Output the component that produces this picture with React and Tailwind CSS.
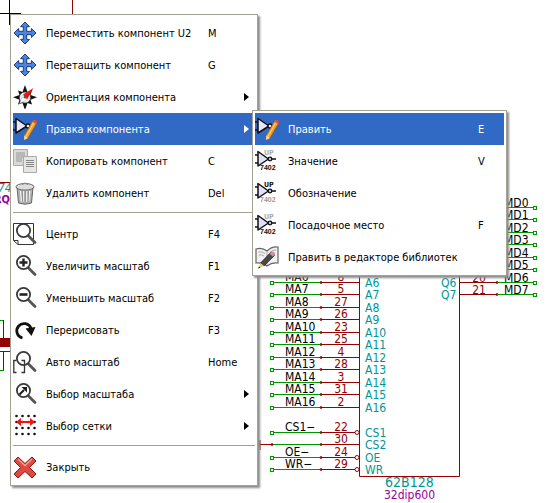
import React from "react";

/* ---------- icons (24 x 24) ---------- */

function Icon({ children }) {
  return (
    <svg viewBox="0 0 24 24" className="size-6 shrink-0" aria-hidden="true">
      {children}
    </svg>
  );
}

function MoveIcon() {
  return (
    <Icon>
      <path d="M12.5 2 17 6.6H14V11H18.400V8L23 12.500 18.400 17V14H14V18.400H17L12.500 23 8 18.400H11V14H6.600V17L2 12.500 6.600 8V11H11V6.600H8Z" fill="#999" opacity=".5" />
      <path d="M12 1 16.500 5.600H13.700V10.300H18.400V7.500L23 12 18.400 16.500V13.700H13.700V18.400H16.500L12 23 7.500 18.400H10.300V13.700H5.600V16.500L1 12 5.600 7.500V10.300H10.300V5.600H7.500Z" fill="#4a86e0" stroke="#1c3f7c" strokeWidth="1" strokeLinejoin="round" />
    </Icon>
  );
}

function CompassIcon() {
  return (
    <Icon>
      <path d="M12 0 14.500 7 19 5.500 17.500 10 24 12.300 17.500 14.800 19 19.500 14.500 18 12 25 9.500 18 5 19.500 6.500 14.800 0 12.300 6.500 10 5 5.500 9.500 7Z" fill="#111" />
      <circle cx="12" cy="12.500" r="5.600" fill="#f0f0f0" stroke="#333" strokeWidth=".7" />
      <path d="M20.500 3 10 9.500 14 14.500Z" fill="#e01818" />
      <path d="M6.500 18.500 10 10 14 14.500Z" fill="#fff" stroke="#aaa" strokeWidth=".5" />
      <circle cx="12" cy="12.300" r="1.300" fill="#555" />
    </Icon>
  );
}

function EditIcon() {
  return (
    <Icon>
      <path d="M0 5H3M0 13H3M16 9H19" stroke="#111" strokeWidth="1.500" />
      <path d="M3 1.500V16L14 9Z" fill="#e6e6ff" stroke="#111" strokeWidth="1.500" strokeLinejoin="round" />
      <circle cx="15" cy="9" r="2" fill="#e6e6ff" stroke="#111" strokeWidth="1.300" />
      <path d="M19.500 4 23.500 6.500 15 21 11 23 11.300 18.500Z" fill="#f4a02c" stroke="#9c5716" strokeWidth=".7" />
      <path d="M20.500 6 13 19.500" stroke="#ffd382" strokeWidth="1" />
      <path d="M19.500 4 21 2.500Q24 3 24 5.500L23.500 6.700Z" fill="#e24c48" />
      <path d="M11.300 18.500 15 21 11 23Z" fill="#f5d7a5" />
    </Icon>
  );
}

function CopyIcon() {
  return (
    <Icon>
      <path d="M.5.500H14.500V16.500H.500Z" fill="#d9d9d5" stroke="#aaa" />
      <path d="M3 4H12M3 6H12M3 8H12M3 10H9M3 12H9" stroke="#999" />
      <path d="M10.500 7.500H23.500V23.500H10.500Z" fill="#e6e6e2" stroke="#aaa" />
      <path d="M13 11.500H21M13 13.500H21M13 15.500H21M13 17.500H21" stroke="#888" />
    </Icon>
  );
}

function TrashIcon() {
  return (
    <Icon>
      <path d="M4 6H20L18.500 22Q12 24.500 5.500 22Z" fill="#b4b4b4" stroke="#666" />
      <path d="M7.500 10 8.500 20.500M10.500 10V21M13.700 10V21M16.700 10 15.800 20.500" stroke="#eee" strokeWidth="1.300" />
      <path d="M9 9.500 9.800 21M12.200 10V21.500M15.200 10V21" stroke="#777" strokeWidth=".7" />
      <ellipse cx="12" cy="5.800" rx="9" ry="3.300" fill="#ddd" stroke="#666" />
      <path d="M9 3.500Q12 .5 15 3.500" fill="#ccc" stroke="#777" />
    </Icon>
  );
}

function Lens() {
  return (
    <>
      <path d="M15.500 14 22 20.500" stroke="#555" strokeWidth="2.800" strokeLinecap="round" />
      <circle cx="10.500" cy="8.500" r="6.600" fill="none" stroke="#3a3a3a" strokeWidth="1.800" />
    </>
  );
}

function CenterIcon() {
  return (
    <Icon>
      <path d="M.5 1.500H20.500V22.500H5L.500 18.500ZM5 22V18.500H1" fill="none" stroke="#333" />
      <Lens />
    </Icon>
  );
}

function ZoomInIcon() {
  return (
    <Icon>
      <Lens />
      <path d="M6.500 8.500H14.500M10.500 4.500V12.500" stroke="#222" strokeWidth="2.400" />
    </Icon>
  );
}

function ZoomOutIcon() {
  return (
    <Icon>
      <Lens />
      <path d="M6.500 8.500H14.500" stroke="#222" strokeWidth="2.600" />
    </Icon>
  );
}

function RedrawIcon() {
  return (
    <Icon>
      <path d="M9.500 20A7.300 7.300 0 1 1 18 10.500" fill="none" stroke="#111" strokeWidth="2.800" />
      <path d="M12.500 10.500 22.500 9 18.500 18Z" fill="#111" />
    </Icon>
  );
}

function ZoomFitIcon() {
  return (
    <Icon>
      <path d="M3.500 10.500H.800V22.500H3.500M8.500 10.500H11.500V22.500H8.500" fill="none" stroke="#333" strokeWidth="1.300" />
      <Lens />
    </Icon>
  );
}

function ZoomSelectIcon() {
  return (
    <Icon>
      <Lens />
      <path d="M6.500 12.500 11 8" stroke="#222" strokeWidth="2.200" />
      <path d="M14 5V10.500L8.500 5Z" fill="#222" />
    </Icon>
  );
}

function GridIcon() {
  const steps = [3.5, 9.500, 15.500, 21.500];
  return (
    <Icon>
      {[2, 8, 14, 20].map((y) =>
        steps.map((x) => <circle key={x + "-" + y} cx={x} cy={y} r="1.300" fill="#111" />)
      )}
      <path d="M6 8H19" stroke="#f01414" strokeWidth="2" />
      <path d="M3 8 8 4V12ZM22 8 17 4V12Z" fill="#f01414" />
    </Icon>
  );
}

function CloseIcon() {
  return (
    <Icon>
      <path d="M5 2 12 8.500 19 2 23 6 16.500 12.500 23 19 19 23 12 16.500 5 23 1 19 7.500 12.500 1 6Z" fill="#dc4a42" stroke="#8c1712" strokeLinejoin="round" />
      <path d="M5 4 12 10.500 19 4" fill="none" stroke="#f4a29a" strokeWidth="1.300" />
    </Icon>
  );
}

function GateIcon({ top, bottom }) {
  return (
    <Icon>
      <text x="9" y="6" fontSize="7" fontWeight="bold" fontFamily="DejaVu Sans, sans-serif" fill={top}>UP</text>
      <path d="M0 6H3M0 14H3M16 10H21" stroke="#111" strokeWidth="1.500" />
      <path d="M3 2.500V17L13.500 10Z" fill="#dfe0fb" stroke="#111" strokeWidth="1.500" strokeLinejoin="round" />
      <circle cx="15" cy="10" r="1.800" fill="#ccd" stroke="#111" strokeWidth="1.300" />
      <text x="5" y="21" fontSize="7" fontWeight="bold" fontFamily="Liberation Sans, sans-serif" fill={bottom}>7402</text>
    </Icon>
  );
}

function BookIcon() {
  return (
    <Icon>
      <path d="M1 4Q7 2 12 6 17 1 23 2V18Q17 17 12 21 7 17 1 18Z" fill="#f1f1f1" stroke="#666" strokeWidth="1.200" />
      <path d="M12 6V20M3.500 7Q7 6 10 8.500M3.500 10Q6 9 9 11M15 7Q18 5 21 5" fill="none" stroke="#aaa" />
      <path d="M16 7 20 10 9 21 5.500 18Z" fill="#484848" stroke="#222" strokeWidth=".7" />
      <path d="M16 7Q18 5.500 20 8L20 10 18 11.500 14.500 9Z" fill="#d68aa6" />
      <path d="M5.500 18 9 21 3 23.500Z" fill="#e2d27a" />
      <path d="M4 21.500 5.500 22.500 3 23.500Z" fill="#222" />
    </Icon>
  );
}

/* ---------- menus ---------- */

const MAIN_MENU = [
  { label: "Переместить компонент U2", keys: "M", icon: <MoveIcon /> },
  { label: "Перетащить компонент", keys: "G", icon: <MoveIcon /> },
  { label: "Ориентация компонента", more: true, icon: <CompassIcon /> },
  { label: "Правка компонента", more: true, active: true, icon: <EditIcon /> },
  { label: "Копировать компонент", keys: "C", icon: <CopyIcon /> },
  { label: "Удалить компонент", keys: "Del", icon: <TrashIcon /> },
  null,
  { label: "Центр", keys: "F4", icon: <CenterIcon /> },
  { label: "Увеличить масштаб", keys: "F1", icon: <ZoomInIcon /> },
  { label: "Уменьшить масштаб", keys: "F2", icon: <ZoomOutIcon /> },
  { label: "Перерисовать", keys: "F3", icon: <RedrawIcon /> },
  { label: "Авто масштаб", keys: "Home", icon: <ZoomFitIcon /> },
  { label: "Выбор масштаба", more: true, icon: <ZoomSelectIcon /> },
  { label: "Выбор сетки", more: true, icon: <GridIcon /> },
  null,
  { label: "Закрыть", icon: <CloseIcon /> },
];

const EDIT_MENU = [
  { label: "Править", keys: "E", active: true, icon: <EditIcon /> },
  { label: "Значение", keys: "V", icon: <GateIcon top="#aaa" bottom="#111" /> },
  { label: "Обозначение", icon: <GateIcon top="#111" bottom="#999" /> },
  { label: "Посадочное место", keys: "F", icon: <GateIcon top="#aaa" bottom="#111" /> },
  { label: "Править в редакторе библиотек", icon: <BookIcon /> },
];

function Menu({ items, label, place, keysWidth }) {
  return (
    <div
      role="menu"
      aria-label={label}
      className={`absolute border border-[#a3a293] bg-white p-0.5 shadow-[2px_2px_2px_#8c8c8c] ${place}`}
    >
      {items.map((item, i) =>
        item ? (
          <button
            key={i}
            type="button"
            role="menuitem"
            aria-haspopup={item.more ? "menu" : undefined}
            className={`flex h-8 w-full items-center text-left whitespace-nowrap ${
              item.active ? "bg-[#316ac5] text-white" : "text-black"
            }`}
          >
            {item.icon}
            <span className="ml-[9px] flex-1 pt-0.5">{item.label}</span>
            {item.keys && <span className={`pt-0.5 ${keysWidth}`}>{item.keys}</span>}
            {item.more && (
              <svg viewBox="0 0 5 8" className="mr-1.5 h-2 w-[5px]" aria-hidden="true">
                <path d="M0 0 5 4 0 8Z" fill="currentColor" />
              </svg>
            )}
          </button>
        ) : (
          <hr key={i} className="mt-[3px] mb-[5px] border-[#a3a293]" />
        )
      )}
    </div>
  );
}

/* ---------- schematic ---------- */

const RED = "#960000";
const GREEN = "#009600";
const TEAL = "#009696";
const PURPLE = "#960096";

const ADDRESS_PINS = ["8", "5", "27", "26", "23", "25", "4", "28", "3", "31", "2"];
const CONTROL_PINS = [
  { net: "CS1−", num: "22", name: "CS1", inverted: true },
  { net: null, num: "30", name: "CS2" },
  { net: "OE−", num: "24", name: "OE", inverted: true },
  { net: "WR−", num: "29", name: "WR", inverted: true },
];
const DATA_PINS = [
  { net: "MD0" },
  { net: "MD1" },
  { net: "MD2" },
  { net: "MD3" },
  { net: "MD4" },
  { net: "MD5" },
  { net: "MD6", num: "20", name: "Q6" },
  { net: "MD7", num: "21", name: "Q7" },
];

function LeftPin({ y, net, num, name, inverted }) {
  return (
    <g>
      <path d={`M273 ${y}H321`} stroke={GREEN} />
      <path d={`M321 ${y}H${inverted ? 355 : 359}`} stroke={RED} />
      <circle cx="321" cy={y} r="1" fill="none" stroke={RED} />
      {inverted && <circle cx="357" cy={y} r="2" fill="white" stroke={RED} />}
      {net && <rect x="270.500" y={y - 1} width="3" height="3" fill="white" stroke={GREEN} />}
      {net && <text x="285" y={y - 2}>{net}</text>}
      <text x="341" y={y - 2} textAnchor="middle" fill={RED}>{num}</text>
      <text x="365" y={y + 4} fill={TEAL}>{name}</text>
    </g>
  );
}

function Schematic() {
  return (
    <svg
      width="549"
      height="503"
      viewBox="0 0 549 503"
      role="img"
      aria-label="62B128"
      fontFamily="'DejaVu Sans Condensed', 'DejaVu Sans', sans-serif"
      fontStretch="condensed"
      fontSize="12"
      className="block"
    >
      <path d="M9.500 0V25M0 13.500H21" stroke="#000" />
      <path d="M72.500 0V14M0 182.500H10" stroke={RED} />
      <text x="-2" y="192" fontSize="12" fontStyle="italic" fill={TEAL}>74</text>
      <text x="-6" y="203" fontSize="11" fontWeight="bold" fill={PURPLE}>RQ</text>
      <path d="M0 320.500H4M0 370.500H4" stroke={GREEN} />
      <path d="M3.500 320V338M0 351.500H10M3.500 351V370" stroke={RED} fill="none" />
      <path d="M0 338H10V347H0Z" fill={RED} />

      <path d="M359.500 200V476.500H459.500V200" fill="none" stroke={RED} />
      {ADDRESS_PINS.map((num, i) => (
        <LeftPin
          key={i}
          y={Math.floor(282 + i * 12.5) + 0.5}
          net={"MA" + (i + 6)}
          num={num}
          name={"A" + (i + 6)}
        />
      ))}
      {CONTROL_PINS.map((pin, i) => (
        <LeftPin key={pin.name} y={Math.floor(432 + i * 12.5) + 0.5} {...pin} />
      ))}
      <path d="M259 444.500H273M260 440V450" stroke={RED} />
      <circle cx="272" cy="444.500" r="1" fill="none" stroke={RED} />

      {DATA_PINS.map(({ net, num, name }, i) => {
        const y = Math.floor(207 + i * 12.5) + 0.5;
        return (
          <g key={net}>
            <path d={`M459 ${y}H497`} stroke={RED} />
            <circle cx="497" cy={y} r="1" fill="none" stroke={RED} />
            <path d={`M497 ${y}H533`} stroke={GREEN} />
            <rect x="533.500" y={y - 1} width="3" height="3" fill="white" stroke={GREEN} />
            <text x="504" y={y - 1}>{net}</text>
            {num && <text x="479" y={y - 1} textAnchor="middle" fill={RED}>{num}</text>}
            {name && <text x="441" y={y + 4} fill={TEAL}>{name}</text>}
          </g>
        );
      })}
      <text x="385" y="487" fontSize="14" fill={TEAL}>62B128</text>
      <text x="384" y="499" fill={PURPLE}>32dip600</text>
    </svg>
  );
}

export default function App() {
  return (
    <main className="relative min-h-screen overflow-hidden bg-white font-['DejaVu_Sans_Condensed','DejaVu_Sans',sans-serif] text-[11px] leading-4 [font-stretch:condensed]">
      <Schematic />
      <Menu items={MAIN_MENU} label="Компонент" place="top-3.5 left-2.5 w-62" keysWidth="w-[47px]" />
      <Menu items={EDIT_MENU} label="Правка компонента" place="top-[110px] left-[252px] w-[255px]" keysWidth="w-[26px]" />
    </main>
  );
}
